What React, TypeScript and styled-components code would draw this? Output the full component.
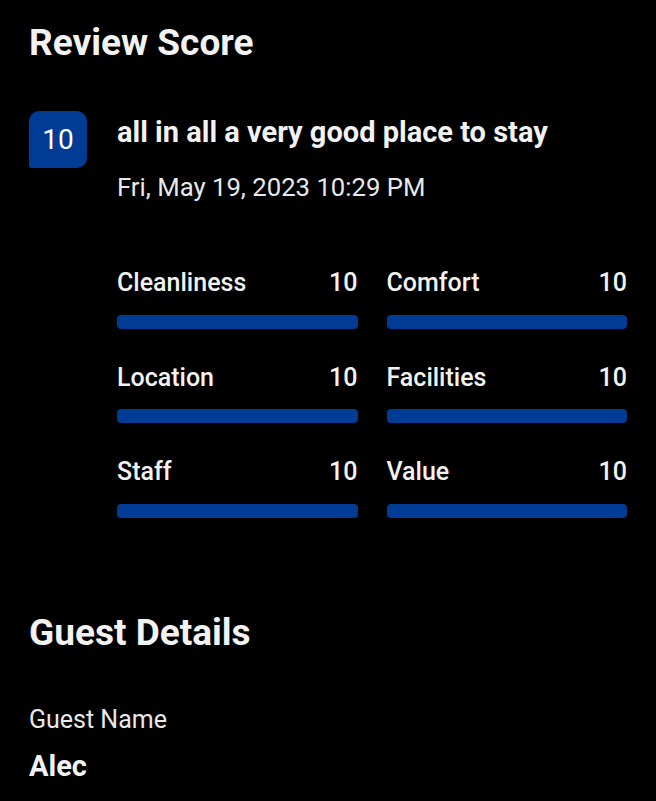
import React from "react";
import styled, { createGlobalStyle } from "styled-components";

const GlobalStyle = createGlobalStyle`
  body {
    margin: 0;
    background: #000;
    color: #f2f2f2;
    font-family: Roboto, "Noto Sans", "Liberation Sans", sans-serif;
  }
`;

const Page = styled.div`
  padding: 21px 29px 20px 29px;
  background: #000;
  min-height: 801px;
  box-sizing: border-box;
`;

const SectionTitle = styled.h2<{ $top?: number }>`
  margin: ${(p) => p.$top ?? 0}px 0 0;
  font-size: 37px;
  line-height: 44px;
  font-weight: 700;
  color: #f2f2f2;
`;

const ReviewRow = styled.div`
  display: flex;
  gap: 30px;
  margin-top: 46px;
`;

const ScoreBadge = styled.div`
  flex: none;
  width: 58px;
  height: 57px;
  background: #003b95;
  border-radius: 10px 10px 10px 2px;
  display: flex;
  align-items: center;
  justify-content: center;
  font-size: 28px;
  color: #fff;
`;

const ReviewBody = styled.div`
  flex: 1;
  display: flex;
  flex-direction: column;
`;

const ReviewTitle = styled.div`
  font-size: 29px;
  line-height: 34px;
  font-weight: 700;
  margin-top: 4px;
`;

const ReviewDate = styled.div`
  font-size: 25.7px;
  line-height: 30px;
  margin-top: 23px;
  color: #e8e8e8;
`;

const ScoreGrid = styled.div`
  display: grid;
  grid-template-columns: 1fr 1fr;
  column-gap: 29px;
  row-gap: 34px;
  margin-top: 66px;
`;

const ScoreItem = styled.div`
  display: flex;
  flex-direction: column;
`;

const ScoreHead = styled.div`
  display: flex;
  justify-content: space-between;
  font-size: 25px;
  line-height: 30px;
  font-weight: 500;
`;

const Track = styled.div`
  margin-top: 16.5px;
  height: 14px;
  border-radius: 4px;
  background: #1a1a1a;
  overflow: hidden;
`;

const Fill = styled.div`
  height: 100%;
  background: #003b95;
  border-radius: 4px;
`;

const FieldLabel = styled.div`
  margin-top: 50.5px;
  font-size: 25px;
  line-height: 30px;
  color: #e8e8e8;
`;

const FieldValue = styled.div`
  margin-top: 13.5px;
  font-size: 29px;
  line-height: 34px;
  font-weight: 700;
`;

const scores = [
  { label: "Cleanliness", value: 10 },
  { label: "Comfort", value: 10 },
  { label: "Location", value: 10 },
  { label: "Facilities", value: 10 },
  { label: "Staff", value: 10 },
  { label: "Value", value: 10 },
];

export default function App() {
  return (
    <Page>
      <GlobalStyle />
      <SectionTitle>Review Score</SectionTitle>
      <ReviewRow>
        <ScoreBadge>10</ScoreBadge>
        <ReviewBody>
          <ReviewTitle>all in all a very good place to stay</ReviewTitle>
          <ReviewDate>Fri, May 19, 2023 10:29 PM</ReviewDate>
          <ScoreGrid>
            {scores.map((s) => (
              <ScoreItem key={s.label}>
                <ScoreHead>
                  <span>{s.label}</span>
                  <span>{s.value}</span>
                </ScoreHead>
                <Track>
                  <Fill style={{ width: `${s.value * 10}%` }} />
                </Track>
              </ScoreItem>
            ))}
          </ScoreGrid>
        </ReviewBody>
      </ReviewRow>
      <SectionTitle $top={93}>Guest Details</SectionTitle>
      <FieldLabel>Guest Name</FieldLabel>
      <FieldValue>Alec</FieldValue>
    </Page>
  );
}
